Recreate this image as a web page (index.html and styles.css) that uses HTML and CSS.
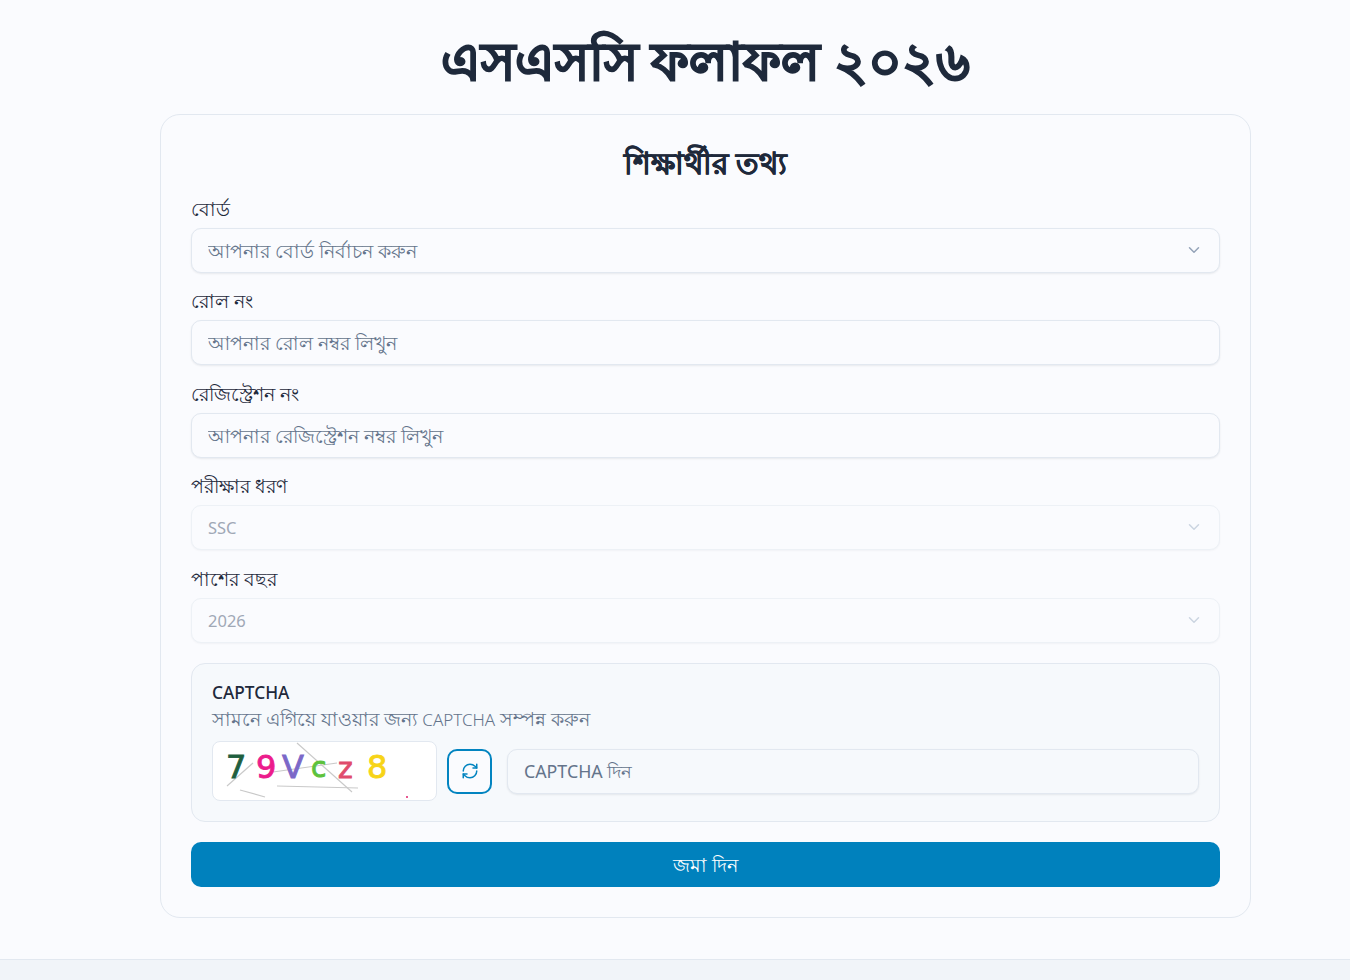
FILE: index.html
```html
<!DOCTYPE html>
<html lang="bn">
<head>
  <meta charset="UTF-8" />
  <meta name="viewport" content="width=device-width, initial-scale=1.0"/>
  <title>এসএসসি ফলাফল ২০২৬</title>
  <link rel="stylesheet" href="styles.css">
</head>
<body>
  <main class="page">
    <h1 class="page-title">এসএসসি ফলাফল ২০২৬</h1>

    <form class="card">
      <h2 class="card-title">শিক্ষার্থীর তথ্য</h2>

      <div class="form-group">
        <label for="board">বোর্ড</label>
        <div class="select-wrap">
          <select id="board">
            <option>আপনার বোর্ড নির্বাচন করুন</option>
          </select>
          <svg class="chevron" viewBox="0 0 24 24"><path d="M6 9l6 6 6-6"/></svg>
        </div>
      </div>

      <div class="form-group">
        <label for="roll">রোল নং</label>
        <input type="text" id="roll" placeholder="আপনার রোল নম্বর লিখুন">
      </div>

      <div class="form-group">
        <label for="reg">রেজিস্ট্রেশন নং</label>
        <input type="text" id="reg" placeholder="আপনার রেজিস্ট্রেশন নম্বর লিখুন">
      </div>

      <div class="form-group">
        <label for="exam">পরীক্ষার ধরণ</label>
        <div class="select-wrap">
          <select id="exam" disabled>
            <option>SSC</option>
          </select>
          <svg class="chevron" viewBox="0 0 24 24"><path d="M6 9l6 6 6-6"/></svg>
        </div>
      </div>

      <div class="form-group">
        <label for="year">পাশের বছর</label>
        <div class="select-wrap">
          <select id="year" disabled>
            <option>2026</option>
          </select>
          <svg class="chevron" viewBox="0 0 24 24"><path d="M6 9l6 6 6-6"/></svg>
        </div>
      </div>

      <!-- Captcha -->
      <div class="captcha-box">
        <h3>CAPTCHA</h3>
        <p>সামনে এগিয়ে যাওয়ার জন্য <span class="latin">CAPTCHA</span> সম্পন্ন করুন</p>
        <div class="captcha-row">
          <div class="captcha-image">
            <svg viewBox="0 0 223 58" width="223" height="58">
              <g class="noise">
                <path d="M14 44L40 21"/>
                <path d="M27 48L52 55"/>
                <path d="M84 1L139 50"/>
                <path d="M64 44L145 46"/>
                <path d="M60 30L124 21"/>
              </g>
              <text x="13" y="36" fill="#1f5f3f" stroke="#1f5f3f" class="c-big">7</text>
              <text x="43" y="36" fill="#ec1c8c" stroke="#ec1c8c" class="c-big">9</text>
              <text x="69" y="36" fill="#7b68c8" stroke="#7b68c8" class="c-big">V</text>
              <text x="98" y="35" fill="#5cc23c" stroke="#5cc23c" class="c-mid">c</text>
              <text x="125" y="36" fill="#e04c6c" stroke="#e04c6c" class="c-mid">z</text>
              <text x="154" y="36" fill="#f7d417" stroke="#f7d417" class="c-big">8</text>
              <circle cx="194" cy="55" r="1" fill="#e0206c"/>
            </svg>
          </div>
          <button type="button" class="refresh-btn" aria-label="refresh">
            <svg viewBox="0 0 24 24"><path d="M3 12a9 9 0 0 1 9-9 9.75 9.75 0 0 1 6.74 2.74L21 8"/><path d="M21 3v5h-5"/><path d="M21 12a9 9 0 0 1-9 9 9.75 9.75 0 0 1-6.74-2.74L3 16"/><path d="M8 16H3v5"/></svg>
          </button>
          <input type="text" class="captcha-input" placeholder="CAPTCHA দিন">
        </div>
      </div>

      <button type="submit" class="submit-btn">জমা দিন</button>
    </form>
  </main>
  <footer class="footer"></footer>
</body>
</html>
```

FILE: styles.css
```css
* {
  box-sizing: border-box;
}

body {
  font-family: "Noto Sans", Arial, sans-serif;
  background-color: #fafbfe;
  color: #1e293b;
  margin: 0;
  min-height: 980px;
}

.page {
  width: 1091px;
  margin-left: 160px;
  height: 959px;
}

.page-title {
  margin: 0;
  padding-top: 24px;
  height: 114px;
  line-height: 72px;
  text-align: center;
  font-size: 52px;
  font-weight: 700;
  -webkit-text-stroke: 1.4px #1e293b;
}

.card {
  height: 804px;
  padding: 30px;
  border: 1px solid #e2e8f0;
  border-radius: 20px;
}

.card-title {
  margin: 0 0 14.75px;
  height: 36px;
  line-height: 36px;
  text-align: center;
  font-size: 29.5px;
  font-weight: 700;
  -webkit-text-stroke: 0.5px #1e293b;
}

.form-group {
  margin-bottom: 15.5px;
}

label {
  display: block;
  height: 24px;
  line-height: 26px;
  margin-bottom: 8px;
  font-size: 19px;
}

input, select {
  display: block;
  width: 100%;
  height: 45px;
  padding: 0 16px;
  font-family: inherit;
  font-size: 18.6px;
  color: #64748b;
  background: #fafbfe;
  border: 1px solid #e2e8f0;
  border-radius: 10px;
  box-shadow: 0 1px 2px rgba(15, 23, 42, 0.08);
  outline: none;
}

input::placeholder {
  color: #64748b;
  opacity: 1;
}

select {
  appearance: none;
}

select:disabled {
  font-size: 16.5px;
  color: #a0a8b6;
  border-color: #edf1f6;
  opacity: 1;
  box-shadow: 0 1px 2px rgba(15, 23, 42, 0.04);
}

.select-wrap {
  position: relative;
}

.chevron {
  position: absolute;
  right: 17px;
  top: 13px;
  width: 18px;
  height: 18px;
  fill: none;
  stroke: #94a3b8;
  stroke-width: 2;
  stroke-linecap: round;
  stroke-linejoin: round;
}

select:disabled + .chevron {
  stroke: #cbd5e1;
}

.captcha-box {
  height: 159px;
  padding: 19px 20px;
  margin: 20px 0;
  background: #f6f9fc;
  border: 1px solid #e2e8f0;
  border-radius: 14px;
}

.captcha-box h3 {
  margin: 0;
  height: 20px;
  line-height: 20px;
  font-size: 17.3px;
  font-weight: 500;
}

.captcha-box p {
  margin: 3px 0 0;
  height: 28px;
  line-height: 26px;
  font-size: 18.6px;
  color: #64748b;
}

.latin {
  font-size: 17px;
  font-weight: 300;
}

.captcha-row {
  display: flex;
  align-items: center;
  margin-top: 7.3px;
}

.captcha-image {
  flex: none;
  width: 225px;
  height: 60px;
  margin-right: 10px;
  background: #fff;
  border: 1px solid #e2e8f0;
  border-radius: 8px;
  overflow: hidden;
}

.captcha-image svg {
  display: block;
}

.noise path {
  fill: none;
  stroke: #c9c9c9;
  stroke-width: 1.2;
}

.c-big, .c-mid {
  font-family: "DejaVu Sans", sans-serif;
  stroke-width: 0.9;
}

.c-big {
  font-size: 32px;
}

.c-mid {
  font-size: 28px;
}

.refresh-btn {
  flex: none;
  width: 45px;
  height: 45px;
  padding: 0;
  margin-right: 15px;
  display: flex;
  align-items: center;
  justify-content: center;
  background: #fafbfe;
  border: 2px solid #0284c0;
  border-radius: 10px;
}

.refresh-btn svg {
  width: 18px;
  height: 18px;
  fill: none;
  stroke: #0284c0;
  stroke-width: 2;
  stroke-linecap: round;
  stroke-linejoin: round;
}

.captcha-input {
  flex: 1;
  font-size: 17.8px;
  background: #f6f9fc;
}

.submit-btn {
  display: block;
  width: 100%;
  height: 45px;
  padding-top: 6px;
  font-family: inherit;
  font-size: 19.3px;
  color: #fff;
  background-color: #0081bd;
  border: none;
  border-radius: 10px;
}

.footer {
  height: 21px;
  background: #f1f4f9;
  border-top: 1px solid #e2e8f0;
}
```
